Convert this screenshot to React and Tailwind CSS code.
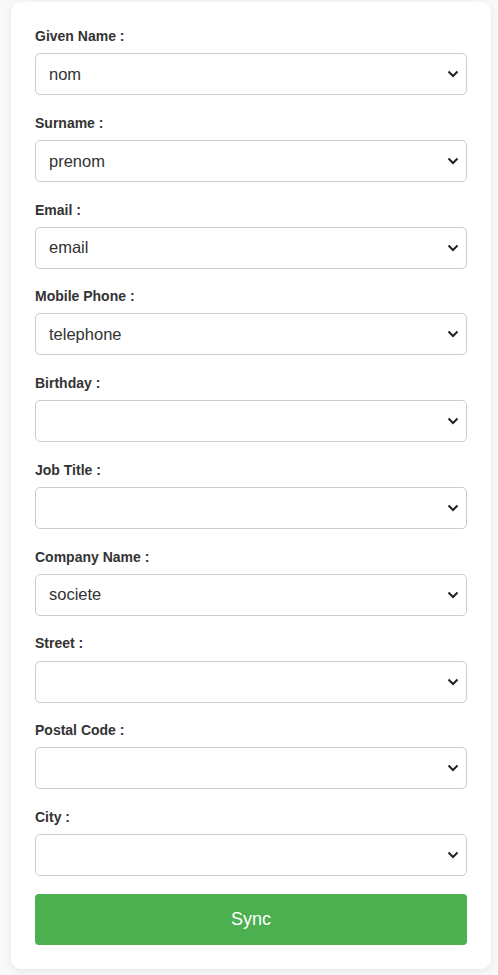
import React, { useState } from "react";

const fields = [
  { label: "Given Name", value: "nom" },
  { label: "Surname", value: "prenom" },
  { label: "Email", value: "email" },
  { label: "Mobile Phone", value: "telephone" },
  { label: "Birthday", value: "" },
  { label: "Job Title", value: "" },
  { label: "Company Name", value: "societe" },
  { label: "Street", value: "" },
  { label: "Postal Code", value: "" },
  { label: "City", value: "" },
];

const options = ["", "nom", "prenom", "email", "telephone", "societe"];

const Chevron = () => (
  <svg
    className="pointer-events-none absolute right-[8px] top-1/2 -translate-y-1/2"
    width="12"
    height="8"
    viewBox="0 0 12 8"
    fill="none"
  >
    <path d="M1.5 1.5L6 6L10.5 1.5" stroke="#222" strokeWidth="2" />
  </svg>
);

const App = () => {
  const [values, setValues] = useState(fields.map((f) => f.value));

  const handleChange = (i, v) => {
    setValues((prev) => prev.map((x, j) => (j === i ? v : x)));
  };

  return (
    <div className="min-h-[975px] bg-[#f9f9f9] pt-[2px] font-['Liberation_Sans',Arial,sans-serif]">
      <div className="mx-[11px] w-[480px] rounded-[10px] bg-white px-6 pt-[26px] pb-6 shadow-[0_2px_10px_rgba(0,0,0,0.08)]">
        {fields.map((field, i) => (
          <div key={field.label} className={i === 0 ? "" : "mt-[19.7px]"}>
            <label className="block text-[14px] leading-[16.1px] font-bold text-[#333]">
              {field.label} :
            </label>
            <div className="relative mt-[9px]">
              <select
                value={values[i]}
                onChange={(e) => handleChange(i, e.target.value)}
                className="block h-[42px] w-full appearance-none rounded-[5px] border border-[#ccc] bg-white pl-[13px] text-[16.5px] text-[#333] outline-none"
              >
                {options.map((o) => (
                  <option key={o} value={o}>
                    {o}
                  </option>
                ))}
              </select>
              <Chevron />
            </div>
          </div>
        ))}
        <button className="mt-[17.5px] h-[51px] w-full rounded-[4px] bg-[#4caf50] text-[18px] text-white">
          Sync
        </button>
      </div>
    </div>
  );
};

export default App;
